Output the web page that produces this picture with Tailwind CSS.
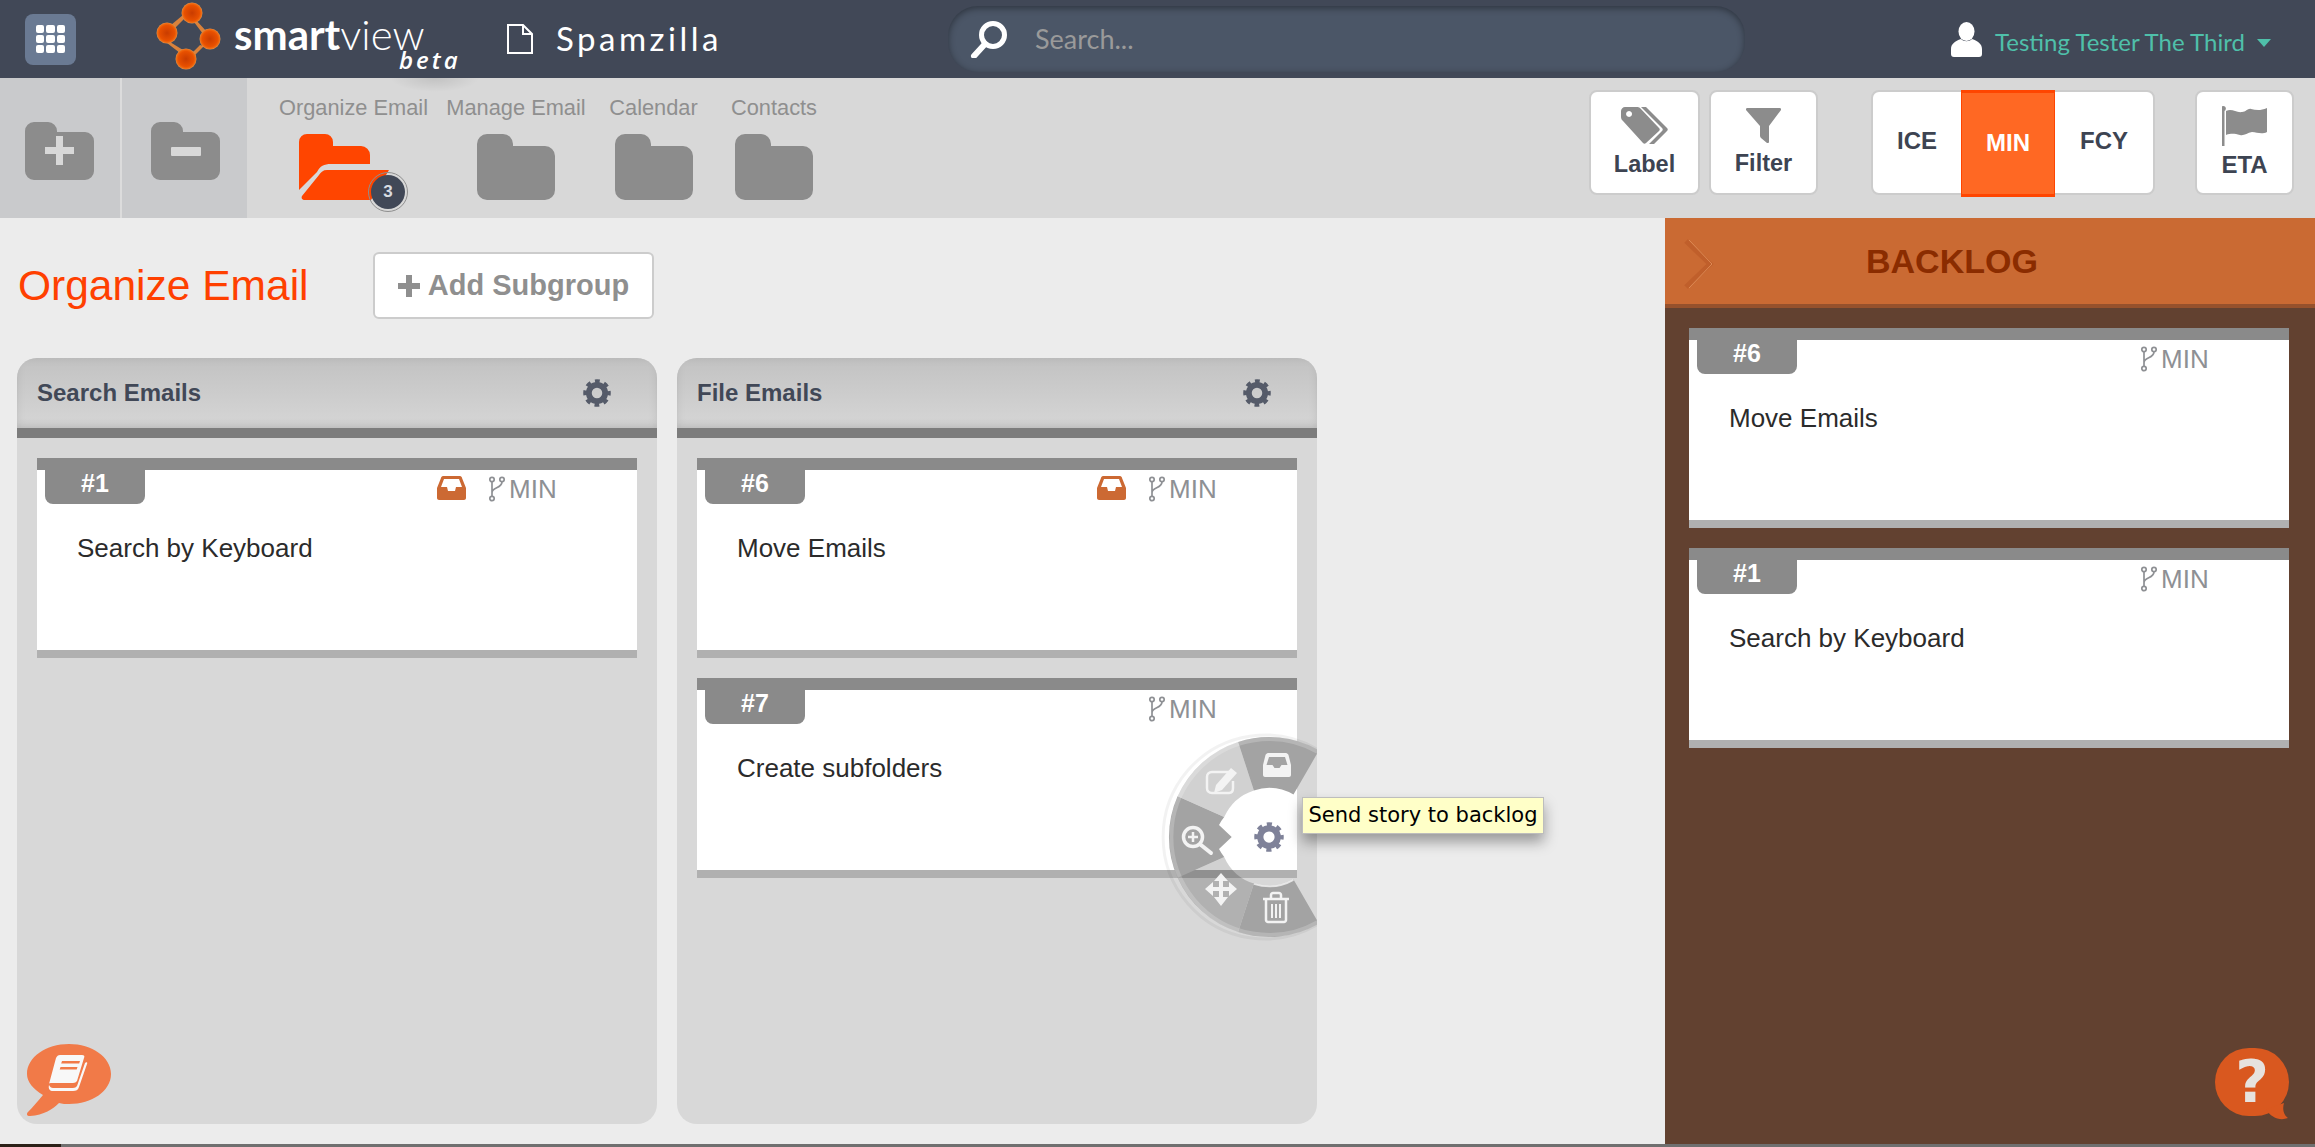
<!DOCTYPE html>
<html lang="en">
<head>
    <meta charset="UTF-8">
    <title>Smartview - Spamzilla</title>
    <script src="https://cdn.jsdelivr.net/npm/@tailwindcss/browser@4"></script>
</head>
<body class="w-[2315px] h-[1147px] overflow-hidden bg-[#ececec] font-['Liberation_Sans',sans-serif]">
    <!-- shared icons -->
    <svg class="hidden">
        <symbol id="gear" viewBox="0 0 24 24">
            <circle cx="12" cy="12" r="7" fill="none" stroke="currentColor" stroke-width="5"/>
            <circle cx="12" cy="12" r="10" fill="none" stroke="currentColor" stroke-width="3.6" stroke-dasharray="4 3.85" stroke-dashoffset="2"/>
        </symbol>
        <symbol id="branch" viewBox="0 0 18 26">
            <g fill="none" stroke="currentColor" stroke-width="1.7">
                <circle cx="4" cy="3.5" r="2.2"/>
                <circle cx="14" cy="3.5" r="2.2"/>
                <circle cx="4" cy="22.5" r="2.2"/>
                <path d="M4 5.800V20.200M14 5.800c0 7-10 5-10 11"/>
            </g>
        </symbol>
        <symbol id="folder" viewBox="0 0 78 66">
            <path fill="currentColor" d="M10 0h16a10 10 0 0 1 10 10v2h32a10 10 0 0 1 10 10v34a10 10 0 0 1-10 10H10A10 10 0 0 1 0 56V10A10 10 0 0 1 10 0z"/>
        </symbol>
    </svg>

    <!-- top bar -->
    <header class="h-[78px] bg-[#414857] flex items-center">
        <button class="ml-[25px] w-[51px] h-[51px] rounded-lg bg-[#6a7a93] grid grid-cols-3 gap-[2px] p-[11px] content-center">
            <span class="h-[8px] rounded-[2px] bg-white"></span><span class="h-[8px] rounded-[2px] bg-white"></span><span class="h-[8px] rounded-[2px] bg-white"></span>
            <span class="h-[8px] rounded-[2px] bg-white"></span><span class="h-[8px] rounded-[2px] bg-white"></span><span class="h-[8px] rounded-[2px] bg-white"></span>
            <span class="h-[8px] rounded-[2px] bg-white"></span><span class="h-[8px] rounded-[2px] bg-white"></span><span class="h-[8px] rounded-[2px] bg-white"></span>
        </button>
        <svg class="ml-[79px] shrink-0" width="70" height="78" viewBox="155 0 70 78">
            <defs>
                <radialGradient id="node"><stop offset="0" stop-color="#c93c00"/><stop offset="0.72" stop-color="#e85000"/><stop offset="0.9" stop-color="#f06a10"/><stop offset="1" stop-color="#d99050"/></radialGradient>
            </defs>
            <path fill="#d9823c" d="M186 17L174 29L171 25L183 15ZM196 20L207 32L203 34L194 22ZM204 46L194 56L191 54L200 45ZM170 42L183 50L180 53L167 43Z"/>
            <circle cx="192" cy="13" r="10.500" fill="url(#node)"/>
            <circle cx="167" cy="33" r="10.500" fill="url(#node)"/>
            <circle cx="210" cy="39" r="10.500" fill="url(#node)"/>
            <circle cx="186" cy="59" r="10.500" fill="url(#node)"/>
        </svg>
        <div class="ml-[9px] w-[273px] relative h-[78px] text-white shrink-0 font-['Lato',sans-serif]">
            <div class="absolute left-0 top-[17px] text-[42px] leading-[34px] whitespace-nowrap"><span class="font-bold">smart</span><span class="font-light">view</span></div>
            <div class="absolute left-[165px] top-[50px] text-[24px] leading-[20px] italic font-semibold tracking-[3px] font-['Open_Sans',sans-serif]">beta</div>
        </div>
        <svg class="shrink-0" width="26" height="30" viewBox="0 0 26 30" fill="none" stroke="#fff" stroke-width="2">
            <path d="M1 1h15l9 9v19H1zM16 1v9h9"/>
        </svg>
        <div class="ml-[23px] w-[392px] text-white text-[33px] tracking-[3.5px] font-['Lato',sans-serif]">Spamzilla</div>
        <div class="w-[797px] h-[66px] rounded-[30px] bg-[#4b5667] shadow-[inset_0_2px_7px_rgba(0,0,0,0.4)] flex items-center pl-[22px]">
            <svg width="38" height="38" viewBox="0 0 38 38" fill="none" stroke="#fff">
                <circle cx="23" cy="15" r="11.500" stroke-width="5"/>
                <path d="M15 24L4 36" stroke-width="6" stroke-linecap="round"/>
            </svg>
            <span class="ml-[27px] text-[27px] text-[#9a9a9a] font-['Lato',sans-serif]">Search...</span>
        </div>
        <div class="ml-[206px] flex items-center">
            <svg width="31" height="35" viewBox="0 0 31 35" fill="#fff">
                <ellipse cx="15.500" cy="9.500" rx="8" ry="9.500"/>
                <path d="M10 17c-6 2-10 5-10 10v5c0 2 1 3 3 3h25c2 0 3-1 3-3v-5c0-5-4-8-10-10-3 3-8 3-11 0z"/>
            </svg>
            <span class="ml-[13px] mt-[6px] text-[24px] text-[#4fc0aa] font-['Lato',sans-serif] whitespace-nowrap">Testing Tester The Third</span>
            <span class="ml-[12px] w-0 h-0 border-x-[7px] border-x-transparent border-t-[8px] border-t-[#4fc0aa] mt-[8px]"></span>
        </div>
    </header>

    <!-- toolbar -->
    <div class="h-[140px] bg-[#d8d8d8] flex items-start relative">
        <div class="absolute left-[390px] top-0 w-[90px] h-[14px] bg-[radial-gradient(ellipse_at_top,rgba(0,0,0,0.1),transparent_70%)]"></div>
        <div class="w-[122px] h-full bg-[#c9cacc] border-r-2 border-[#dcdcdc] pl-[25px] pt-[44px]">
            <svg width="69" height="58" viewBox="0 0 69 58">
                <path fill="#8c8c8c" d="M9 0h14a9 9 0 0 1 9 9v1h28a9 9 0 0 1 9 9v30a9 9 0 0 1-9 9H9a9 9 0 0 1-9-9V9a9 9 0 0 1 9-9z"/>
                <path fill="#d8d8d8" d="M31 14h7v11h11v7H38v11h-7V32H20v-7h11z"/>
            </svg>
        </div>
        <div class="w-[125px] h-full bg-[#c9cacc] pl-[29px] pt-[44px]">
            <svg width="69" height="58" viewBox="0 0 69 58">
                <path fill="#8c8c8c" d="M9 0h14a9 9 0 0 1 9 9v1h28a9 9 0 0 1 9 9v30a9 9 0 0 1-9 9H9a9 9 0 0 1-9-9V9a9 9 0 0 1 9-9z"/>
                <rect x="20" y="25" width="30" height="9" rx="1" fill="#d8d8d8"/>
            </svg>
        </div>
        <nav class="flex items-start text-[21.8px] text-[#8f8f8f] pt-[18px] whitespace-nowrap">
            <div class="ml-[32px] w-[149px] relative flex flex-col items-center">
                <span class="leading-[24px]">Organize Email</span>
                <svg class="absolute left-[20px] top-[38px]" width="90" height="66" viewBox="0 0 90 66" fill="#ff4500">
                    <path d="M8 0h18a8 8 0 0 1 8 8v4h28a9 9 0 0 1 9 9v9H32c-7 0-11 2-14 8L0 56V8a8 8 0 0 1 8-8z"/>
                    <path d="M28 36h62L72 66H6c-3 0-4-2-3-4l17-21c2-3 4-5 8-5z"/>
                </svg>
                <span class="absolute left-[92px] top-[79px] w-[34px] h-[34px] rounded-full bg-[#414857] text-[#d8dce2] font-bold text-[17px] flex items-center justify-center outline-1 outline-offset-[2px] outline-[#8f8f8f]">3</span>
            </div>
            <div class="ml-[20px] w-[136px] flex flex-col items-center">
                <span class="leading-[24px]">Manage Email</span>
                <svg class="mt-[14px] text-[#8c8c8c]" width="78" height="66"><use href="#folder"/></svg>
            </div>
            <div class="ml-[26px] w-[87px] flex flex-col items-center">
                <span class="leading-[24px]">Calendar</span>
                <svg class="mt-[14px] text-[#8c8c8c]" width="78" height="66"><use href="#folder"/></svg>
            </div>
            <div class="ml-[34px] w-[86px] flex flex-col items-center">
                <span class="leading-[24px]">Contacts</span>
                <svg class="mt-[14px] text-[#8c8c8c]" width="78" height="66"><use href="#folder"/></svg>
            </div>
        </nav>
        <div class="ml-auto mr-[21px] mt-[12px] flex items-start text-[24px] font-bold text-[#3d4452]">
            <button class="w-[111px] h-[105px] bg-white rounded-lg border-2 border-[#ccc] flex flex-col items-center pt-[14px]">
                <svg width="47" height="39" viewBox="0 0 47 39">
                    <path fill="#8c8c8c" fill-rule="evenodd" d="M4 1h12c1 0 2 0 3 1l19 20c1 1 1 2 0 3L25 37c-1 1-2 1-3 0L2 15c-1-1-2-2-2-4V5c0-2 2-4 4-4zM8 5a3 3 0 1 0 .1 0z"/>
                    <path fill="#8c8c8c" d="M20 1h5l21 21c1 1 1 2 0 3L33 38h-5l13-13c1-1 1-2 0-3z"/>
                </svg>
                <span class="mt-[5px] leading-[28px] text-[23.5px]">Label</span>
            </button>
            <button class="ml-[9px] w-[109px] h-[105px] bg-white rounded-lg border-2 border-[#ccc] flex flex-col items-center pt-[16px]">
                <svg width="35" height="36" viewBox="0 0 35 36" fill="#8c8c8c">
                    <path d="M1 0h33c1 0 1 1 1 2L23 18v16c0 1-1 1-2 1l-6-5c-1-1-1-2-1-3V18L0 2c0-1 0-2 1-2z"/>
                </svg>
                <span class="mt-[5px] leading-[28px] text-[23.5px]">Filter</span>
            </button>
            <div class="ml-[53px] w-[284px] h-[105px] bg-white rounded-lg border-2 border-[#ccc] flex relative">
                <span class="w-[88px] leading-[97px] text-center">ICE</span>
                <span class="absolute left-[88px] -top-[2px] w-[94px] h-[107px] bg-[#ff6823] border border-y-[3px] border-[#ff4500] text-white text-center leading-[99px]">MIN</span>
                <span class="ml-[94px] w-[98px] leading-[97px] text-center">FCY</span>
            </div>
            <button class="ml-[40px] w-[99px] h-[105px] bg-white rounded-lg border-2 border-[#ccc] flex flex-col items-center pt-[14px]">
                <svg width="46" height="40" viewBox="0 0 46 40" fill="#8c8c8c">
                    <rect x="0" y="2" width="2.500" height="38"/>
                    <circle cx="1.300" cy="2.500" r="2.500"/>
                    <path d="M4 5c6-3 10 2 16 1 4 0 6-4 9-3v0c5 1 9 2 16-1v24c-6 3-10 0-15 0-5 1-8 4-12 3-5-1-8-2-14 0z"/>
                </svg>
                <span class="mt-[5px] leading-[28px]">ETA</span>
            </button>
        </div>
    </div>

    <!-- main -->
    <main class="h-[926px] flex relative">
        <div class="w-[1665px] pt-[34px] pl-[17px]">
            <div class="flex items-center h-[67px]">
                <h1 class="w-[356px] text-[42.5px] text-[#ff4000] pl-px">Organize Email</h1>
                <button class="w-[281px] h-[67px] bg-white rounded-md border-2 border-[#ccc] text-[29px] font-bold text-[#8f8f8f] flex items-center justify-center">
                    <svg width="22" height="22" viewBox="0 0 22 22" fill="#8f8f8f" class="mr-[8px]"><path d="M8 0h6v8h8v6h-8v8H8v-8H0V8h8z"/></svg>
                    Add Subgroup
                </button>
            </div>
            <div class="mt-[39px] flex gap-[20px]">
                <section class="w-[640px] h-[766px] bg-[#d8d8d8] rounded-[20px] overflow-hidden">
                    <div class="h-[80px] border-b-[10px] border-[#7c7c7c] bg-gradient-to-b from-[#c2c2c2] to-[#d6d6d6] shadow-[inset_0_-8px_10px_-6px_rgba(0,0,0,0.1),inset_0_0_10px_rgba(0,0,0,0.08)] flex items-center pl-[20px] pr-[46px]">
                        <h2 class="text-[24px] font-bold text-[#414857]">Search Emails</h2>
                        <svg class="ml-auto text-[#555b69]" width="28" height="28"><use href="#gear"/></svg>
                    </div>
                    <div class="px-[20px] pt-[20px] flex flex-col gap-[20px]">
                        <article class="h-[200px] bg-white border-t-[12px] border-b-[8px] border-t-[#8a8a8a] border-b-[#b0b0b0] relative">
                            <span class="absolute left-[8px] top-0 w-[100px] h-[34px] bg-[#8a8a8a] rounded-b-lg text-white font-bold text-[25px] leading-[26px] text-center">#1</span>
                            <svg class="absolute left-[400px] top-[6px]" width="29" height="24" viewBox="0 0 29 24">
                                <path fill="#cc6933" d="M6 0h17c1 0 2 1 2 2l4 10v10c0 1-1 2-2 2H2c-1 0-2-1-2-2V12L4 2c0-1 1-2 2-2z"/>
                                <path fill="#fff" d="M7 3h15l3 8h-6l-1 4h-7l-1-4H4z"/>
                            </svg>
                            <div class="absolute left-[451px] top-[6px] flex items-center text-[#8e9094] text-[26px] leading-[26px]">
                                <svg width="18" height="26"><use href="#branch"/></svg>
                                <span class="ml-[3px]">MIN</span>
                            </div>
                            <p class="pl-[40px] pt-[64px] text-[26px] leading-[28px] text-[#2b2b2b]">Search by Keyboard</p>
                        </article>
                    </div>
                </section>
                <section class="w-[640px] h-[766px] bg-[#d8d8d8] rounded-[20px] overflow-hidden relative">
                    <div class="h-[80px] border-b-[10px] border-[#7c7c7c] bg-gradient-to-b from-[#c2c2c2] to-[#d6d6d6] shadow-[inset_0_-8px_10px_-6px_rgba(0,0,0,0.1),inset_0_0_10px_rgba(0,0,0,0.08)] flex items-center pl-[20px] pr-[46px]">
                        <h2 class="text-[24px] font-bold text-[#414857]">File Emails</h2>
                        <svg class="ml-auto text-[#555b69]" width="28" height="28"><use href="#gear"/></svg>
                    </div>
                    <div class="px-[20px] pt-[20px] flex flex-col gap-[20px]">
                        <article class="h-[200px] bg-white border-t-[12px] border-b-[8px] border-t-[#8a8a8a] border-b-[#b0b0b0] relative">
                            <span class="absolute left-[8px] top-0 w-[100px] h-[34px] bg-[#8a8a8a] rounded-b-lg text-white font-bold text-[25px] leading-[26px] text-center">#6</span>
                            <svg class="absolute left-[400px] top-[6px]" width="29" height="24" viewBox="0 0 29 24">
                                <path fill="#cc6933" d="M6 0h17c1 0 2 1 2 2l4 10v10c0 1-1 2-2 2H2c-1 0-2-1-2-2V12L4 2c0-1 1-2 2-2z"/>
                                <path fill="#fff" d="M7 3h15l3 8h-6l-1 4h-7l-1-4H4z"/>
                            </svg>
                            <div class="absolute left-[451px] top-[6px] flex items-center text-[#8e9094] text-[26px] leading-[26px]">
                                <svg width="18" height="26"><use href="#branch"/></svg>
                                <span class="ml-[3px]">MIN</span>
                            </div>
                            <p class="pl-[40px] pt-[64px] text-[26px] leading-[28px] text-[#2b2b2b]">Move Emails</p>
                        </article>
                        <article class="h-[200px] bg-white border-t-[12px] border-b-[8px] border-t-[#8a8a8a] border-b-[#b0b0b0] relative">
                            <span class="absolute left-[8px] top-0 w-[100px] h-[34px] bg-[#8a8a8a] rounded-b-lg text-white font-bold text-[25px] leading-[26px] text-center">#7</span>
                            <div class="absolute left-[451px] top-[6px] flex items-center text-[#8e9094] text-[26px] leading-[26px]">
                                <svg width="18" height="26"><use href="#branch"/></svg>
                                <span class="ml-[3px]">MIN</span>
                            </div>
                            <p class="pl-[40px] pt-[64px] text-[26px] leading-[28px] text-[#2b2b2b]">Create subfolders</p>
                        </article>
                    </div>
                    <!-- radial story menu, clipped by the column; the hub is see-through -->
                    <svg class="absolute left-[482px] top-[369px]" width="220" height="220" viewBox="0 0 220 220">
                        <path d="M160 23.400A102 102 0 1 0 160 196.600" fill="none" stroke="#000" stroke-opacity="0.05" stroke-width="3"/>
                        <path fill="#a3a3a3" d="M79.100 14.900A100 100 0 0 1 160 23.400L134.500 67.600A49 49 0 0 0 94.900 63.400z"/>
                        <path fill="#000" fill-opacity="0.18" d="M18.600 69.300A100 100 0 0 1 79.100 14.900L94.900 63.400A49 49 0 0 0 65.200 90.100z"/>
                        <path fill="#a3a3a3" d="M18.600 150.700A100 100 0 0 1 18.600 69.300L65.200 90.100A49 49 0 0 0 60 98L72.700 110L60 122A49 49 0 0 0 65.200 129.900z"/>
                        <path fill="#000" fill-opacity="0.18" d="M79.100 205.100A100 100 0 0 1 18.600 150.700L65.200 129.900A49 49 0 0 0 94.900 156.600z"/>
                        <path fill="#a3a3a3" d="M160 196.600A100 100 0 0 1 79.100 205.100L94.900 156.600A49 49 0 0 0 134.500 152.400z"/>
                        <path d="M160 25.500A98 98 0 1 0 160 194.500" fill="none" stroke="#fff" stroke-opacity="0.2" stroke-width="4"/>
                        <path d="M94.900 157A50 50 0 0 0 134.500 153" fill="none" stroke="#fff" stroke-opacity="0.7" stroke-width="1.500"/>
                        <svg x="95" y="95" width="30" height="30" class="text-[#7f8299]"><use href="#gear"/></svg>
                        <!-- inbox -->
                        <path fill="#f3f3f3" d="M109 26h18c1 0 2 1 2.500 2l2.500 10v10c0 1-1 2-2 2H106c-1 0-2-1-2-2V38l2.500-10c.5-1 1.500-2 2.500-2z"/>
                        <path fill="#a3a3a3" d="M110 30h16l2.500 8h-6l-2 3h-5l-2-3h-6z"/>
                        <!-- edit -->
                        <g fill="none" stroke="#f3f3f3" stroke-width="2.500">
                            <path d="M70 45H53c-3 0-5 2-5 5v11c0 3 2 5 5 5h17c3 0 4-2 4-5v-7"/>
                        </g>
                        <path fill="#f3f3f3" d="M72 41l6 5-15 17-8 3 2-8z"/>
                        <!-- zoom -->
                        <g fill="none" stroke="#f3f3f3">
                            <circle cx="34" cy="110" r="9.500" stroke-width="3.500"/>
                            <path d="M42 118l10 8" stroke-width="4" stroke-linecap="round"/>
                            <path d="M34 105v10M29 110h10" stroke-width="2.500"/>
                        </g>
                        <!-- move -->
                        <path fill="#f3f3f3" d="M62 146l7 8h-5v6h6v-5l8 7-8 7v-5h-6v6h5l-7 9-7-9h5v-6h-6v5l-8-7 8-7v5h6v-6h-5z"/>
                        <!-- trash -->
                        <g fill="none" stroke="#f3f3f3" stroke-width="2.500">
                            <path d="M104 172h26M112 172v-4c0-1 1-2 2-2h6c1 0 2 1 2 2v4"/>
                            <path d="M107 173v20c0 1 1 2 2 2h16c1 0 2-1 2-2v-20"/>
                            <path d="M113 177v14M117 177v14M121 177v14" stroke-width="2"/>
                        </g>
                    </svg>
                </section>
            </div>
        </div>

        <!-- backlog -->
        <aside class="w-[650px] bg-[#624130]">
            <div class="h-[90px] bg-[#ca6a33] border-b-4 border-[#96512c] relative flex items-center">
                <svg class="absolute left-[18px] top-[20px]" width="32" height="52" viewBox="0 0 32 52" fill="none">
                    <path d="M3 3L27 26L3 49" stroke="#c05f2b" stroke-width="5"/>
                    <path d="M6 2L29 26L6 50" stroke="#dd8a55" stroke-width="1"/>
                </svg>
                <h2 class="ml-[201px] text-[34px] font-bold text-[#8a2c00] leading-[82px]">BACKLOG</h2>
            </div>
            <div class="pt-[20px] pl-[24px] pr-[26px] flex flex-col gap-[20px]">
                <article class="h-[200px] bg-white border-t-[12px] border-b-[8px] border-t-[#8a8a8a] border-b-[#b0b0b0] relative">
                    <span class="absolute left-[8px] top-0 w-[100px] h-[34px] bg-[#8a8a8a] rounded-b-lg text-white font-bold text-[25px] leading-[26px] text-center">#6</span>
                    <div class="absolute left-[451px] top-[6px] flex items-center text-[#8e9094] text-[26px] leading-[26px]">
                        <svg width="18" height="26"><use href="#branch"/></svg>
                        <span class="ml-[3px]">MIN</span>
                    </div>
                    <p class="pl-[40px] pt-[64px] text-[26px] leading-[28px] text-[#2b2b2b]">Move Emails</p>
                </article>
                <article class="h-[200px] bg-white border-t-[12px] border-b-[8px] border-t-[#8a8a8a] border-b-[#b0b0b0] relative">
                    <span class="absolute left-[8px] top-0 w-[100px] h-[34px] bg-[#8a8a8a] rounded-b-lg text-white font-bold text-[25px] leading-[26px] text-center">#1</span>
                    <div class="absolute left-[451px] top-[6px] flex items-center text-[#8e9094] text-[26px] leading-[26px]">
                        <svg width="18" height="26"><use href="#branch"/></svg>
                        <span class="ml-[3px]">MIN</span>
                    </div>
                    <p class="pl-[40px] pt-[64px] text-[26px] leading-[28px] text-[#2b2b2b]">Search by Keyboard</p>
                </article>
            </div>
        </aside>

        <!-- tooltip over the menu -->
        <div class="absolute left-[1302px] top-[579px] w-[242px] h-[37px] bg-[#ffffc8] border border-[#bdbdbd] shadow-[0_8px_14px_rgba(0,0,0,0.35)] text-[21px] leading-[35px] text-black text-center whitespace-nowrap font-['DejaVu_Sans',sans-serif]">Send story to backlog</div>

        <!-- floating help bubbles -->
        <svg class="absolute left-[27px] top-[826px]" width="84" height="72" viewBox="0 0 84 72">
            <path fill="#f17a48" d="M42 0c23 0 42 13 42 30S65 60 42 60c-3 0-7 0-10-1-6 6-15 12-29 13-3 0-4-2-2-4 5-5 9-10 15-17C6 45 0 38 0 30 0 13 19 0 42 0z"/>
            <path fill="#f8f8f8" d="M33 11h22c2 0 3 1 2 3L50 37c-1 1-2 2-4 2H25c-2 0-3 0-3 1L29 14c1-2 2-3 4-3z"/>
            <path fill="#f8f8f8" d="M22 41c1 2 2 3 4 3h20c2 0 3-1 4-2l8-23c1-1 3-1 2 1l-8 23c-1 3-3 4-6 4H26c-3 0-5-2-4-6z"/>
            <path fill="#f17a48" d="M35 17h18l-.8 2.500H34.200zM33.500 23h17l-.8 2.500H32.700z"/>
        </svg>
        <div class="absolute left-[2215px] top-[830px] w-[74px] h-[68px] rounded-full bg-[#d9581f] text-[#e6e2de] font-bold text-[58px] leading-[68px] text-center font-['DejaVu_Sans',sans-serif]">?</div>
        <svg class="absolute left-[2260px] top-[885px]" width="30" height="20" viewBox="0 0 30 20">
            <path fill="#d9581f" d="M6 6L24 0c-2 7 0 12 4 15-8 3-17 0-22-9z"/>
        </svg>
    </main>
    <div class="h-[3px] flex">
        <div class="w-[61px] bg-[#2b2018]"></div>
        <div class="flex-1 bg-[#6f6f6f]"></div>
    </div>
</body>
</html>
